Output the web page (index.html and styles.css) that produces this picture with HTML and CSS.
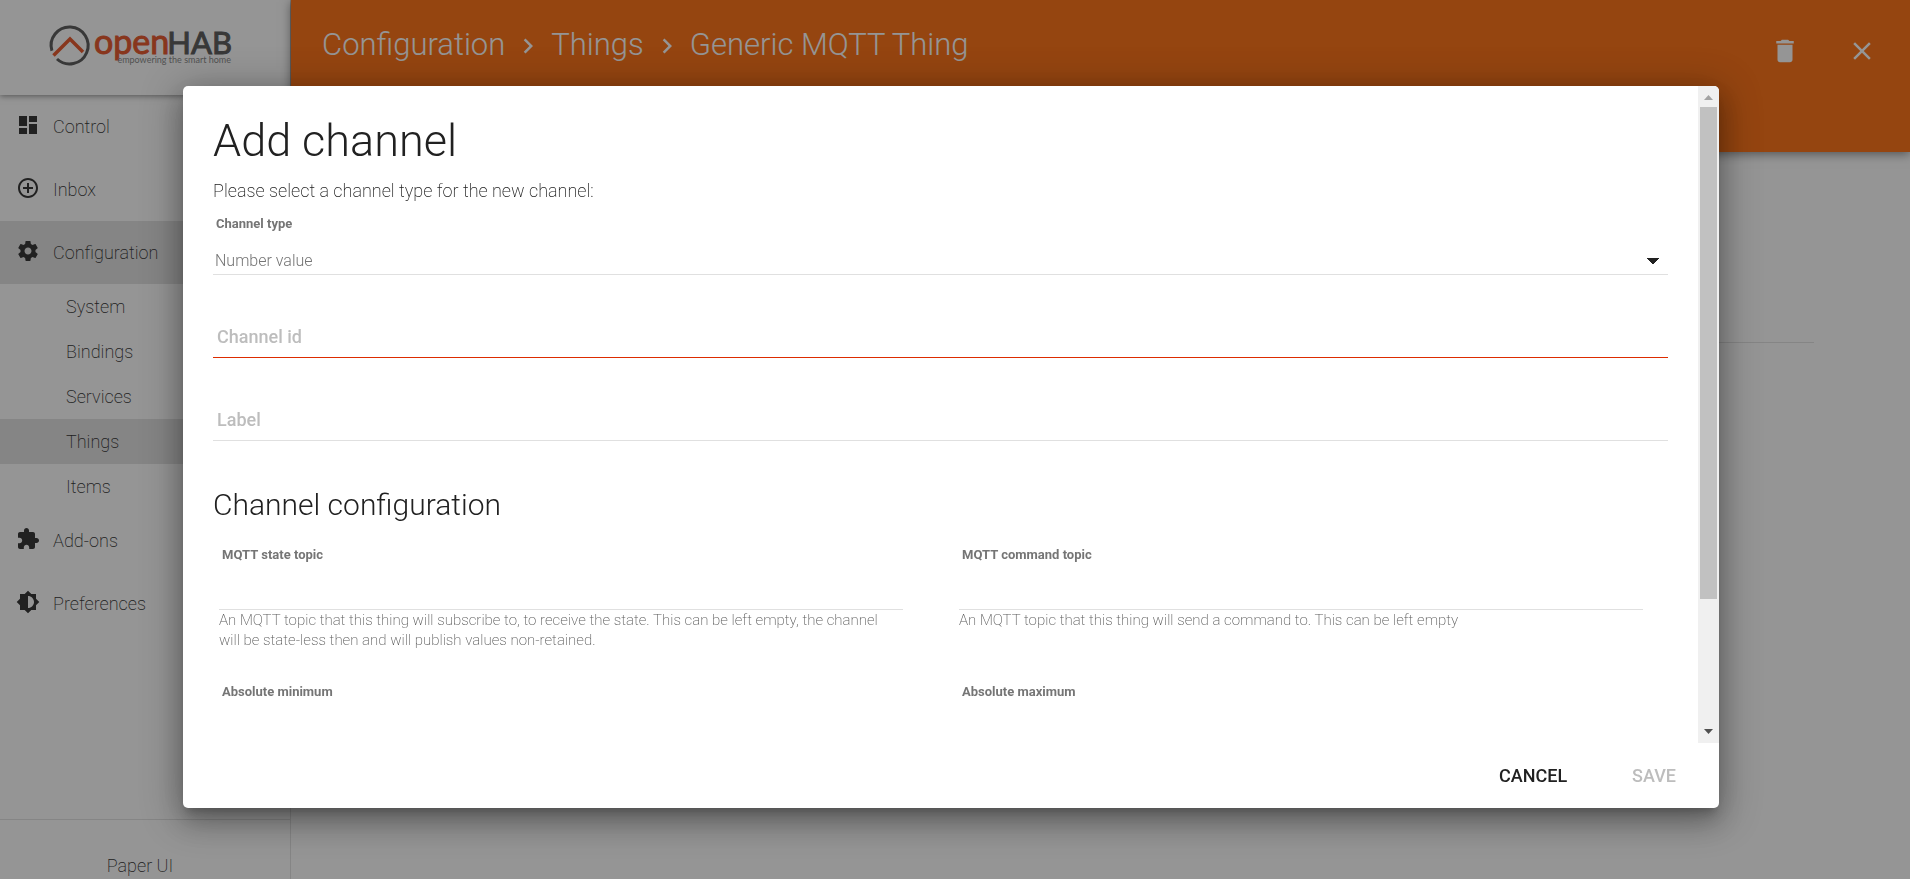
FILE: index.html
```html
<!DOCTYPE html>
<html lang="en">
<head>
    <meta charset="UTF-8">
    <meta name="viewport" content="width=device-width, initial-scale=1.0">
    <title>openHAB Paper UI</title>
    <link rel="stylesheet" href="styles.css">
</head>
<body>

    <div class="app">
        <aside class="sidebar">
            <div class="logo">
                <svg width="190" height="50" viewBox="0 0 190 50" role="img" aria-label="openHAB">
                    <path d="M1.900 24.800A18.500 18.500 0 1 1 7 33" fill="none" stroke="#4d4d4d" stroke-width="3"/>
                    <path d="M3.500 29.500L20 13L33 26" fill="none" stroke="#e64a19" stroke-width="3.500"/>
                    <text x="44" y="28" class="logo-open">open</text>
                    <text x="182" y="28" text-anchor="end" class="logo-hab">HAB</text>
                    <text x="181" y="37" text-anchor="end" class="logo-tag">empowering the smart home</text>
                </svg>
            </div>
            <nav class="menu">
                <a href="#control" class="menu-item">
                    <svg class="icon" viewBox="0 0 24 24"><path d="M3 13h8V3H3v10zm0 8h8v-6H3v6zm10 0h8V11h-8v10zm0-18v6h8V3h-8z"/></svg>
                    Control
                </a>
                <a href="#inbox" class="menu-item">
                    <svg class="icon" viewBox="0 0 24 24"><path d="M13 7h-2v4H7v2h4v4h2v-4h4v-2h-4V7zm-1-5C6.480 2 2 6.480 2 12s4.480 10 10 10 10-4.480 10-10S17.520 2 12 2zm0 18c-4.410 0-8-3.590-8-8s3.590-8 8-8 8 3.590 8 8-3.590 8-8 8z"/></svg>
                    Inbox
                </a>
                <a href="#configuration" class="menu-item active">
                    <svg class="icon" viewBox="0 0 24 24"><path d="M19.430 12.980c.04-.32.07-.64.07-.98s-.03-.66-.07-.98l2.110-1.650c.19-.15.24-.42.12-.64l-2-3.460c-.12-.22-.39-.3-.61-.22l-2.490 1c-.52-.4-1.080-.73-1.690-.98l-.38-2.650C14.460 2.180 14.250 2 14 2h-4c-.25 0-.46.18-.49.42l-.38 2.650c-.61.25-1.170.59-1.690.98l-2.490-1c-.23-.09-.49 0-.61.22l-2 3.460c-.13.22-.07.49.12.64l2.110 1.650c-.04.32-.07.65-.07.98s.03.66.07.98l-2.110 1.650c-.19.15-.24.42-.12.64l2 3.460c.12.22.39.3.61.22l2.490-1c.52.4 1.080.73 1.690.98l.38 2.650c.03.24.24.42.49.42h4c.25 0 .46-.18.49-.42l.38-2.650c.61-.25 1.170-.59 1.690-.98l2.490 1c.23.09.49 0 .61-.22l2-3.460c.12-.22.07-.49-.12-.64l-2.110-1.650zM12 15.500c-1.930 0-3.500-1.570-3.500-3.500s1.570-3.500 3.500-3.500 3.500 1.570 3.500 3.500-1.570 3.500-3.500 3.500z"/></svg>
                    Configuration
                </a>
                <a href="#system" class="sub-item">System</a>
                <a href="#bindings" class="sub-item">Bindings</a>
                <a href="#services" class="sub-item">Services</a>
                <a href="#things" class="sub-item active">Things</a>
                <a href="#items" class="sub-item">Items</a>
                <a href="#addons" class="menu-item">
                    <svg class="icon" viewBox="0 0 24 24"><path d="M20.500 11H19V7c0-1.100-.9-2-2-2h-4V3.500C13 2.120 11.880 1 10.500 1S8 2.120 8 3.500V5H4c-1.100 0-1.990.9-1.990 2v3.800H3.500c1.490 0 2.700 1.210 2.700 2.700s-1.210 2.700-2.700 2.700H2V20c0 1.100.9 2 2 2h3.800v-1.500c0-1.490 1.210-2.700 2.700-2.700 1.490 0 2.700 1.210 2.700 2.700V22H17c1.100 0 2-.9 2-2v-4h1.500c1.380 0 2.500-1.120 2.500-2.500S21.880 11 20.500 11z"/></svg>
                    Add-ons
                </a>
                <a href="#preferences" class="menu-item">
                    <svg class="icon" viewBox="0 0 24 24"><path d="M20 15.310L23.310 12 20 8.690V4h-4.690L12 .69 8.690 4H4v4.690L.69 12 4 15.310V20h4.690L12 23.310 15.310 20H20v-4.690zM12 18V6c3.310 0 6 2.690 6 6s-2.690 6-6 6z"/></svg>
                    Preferences
                </a>
            </nav>
            <div class="sidebar-footer">Paper UI</div>
        </aside>

        <main class="main">
            <header class="toolbar">
                <div class="breadcrumb">
                    <a href="#configuration">Configuration</a>
                    <svg class="chevron" viewBox="0 0 24 24"><path d="M10 6L8.590 7.410 13.170 12l-4.580 4.590L10 18l6-6z"/></svg>
                    <a href="#things">Things</a>
                    <svg class="chevron" viewBox="0 0 24 24"><path d="M10 6L8.590 7.410 13.170 12l-4.580 4.590L10 18l6-6z"/></svg>
                    <span>Generic MQTT Thing</span>
                </div>
                <div class="toolbar-actions">
                    <button type="button" aria-label="Delete"><svg viewBox="0 0 24 24"><path d="M6 19c0 1.100.9 2 2 2h8c1.100 0 2-.9 2-2V7H6v12zM19 4h-3.500l-1-1h-5l-1 1H5v2h14V4z"/></svg></button>
                    <button type="button" aria-label="Close"><svg viewBox="0 0 24 24"><path d="M19 6.410L17.590 5 12 10.590 6.410 5 5 6.410 10.590 12 5 17.590 6.410 19 12 13.410 17.590 19 19 17.590 13.410 12z"/></svg></button>
                </div>
            </header>
            <hr class="divider">
        </main>
    </div>

    <div class="backdrop">
        <form class="dialog" role="dialog" aria-labelledby="dialog-title">
            <div class="dialog-main">
                <div class="dialog-content">
                    <h1 id="dialog-title">Add channel</h1>
                    <p class="intro">Please select a channel type for the new channel:</p>

                    <div class="select-field">
                        <label for="channel-type">Channel type</label>
                        <select id="channel-type">
                            <option>Number value</option>
                        </select>
                    </div>

                    <input class="text-field invalid" type="text" placeholder="Channel id" aria-label="Channel id">
                    <input class="text-field" type="text" placeholder="Label" aria-label="Label">

                    <h2>Channel configuration</h2>
                    <div class="config-grid">
                        <div class="config-field">
                            <label for="state-topic">MQTT state topic</label>
                            <input type="text" id="state-topic">
                            <p>An MQTT topic that this thing will subscribe to, to receive the state. This can be left empty, the channel will be state-less then and will publish values non-retained.</p>
                        </div>
                        <div class="config-field">
                            <label for="command-topic">MQTT command topic</label>
                            <input type="text" id="command-topic">
                            <p>An MQTT topic that this thing will send a command to. This can be left empty</p>
                        </div>
                        <div class="config-field">
                            <label for="abs-min">Absolute minimum</label>
                            <input type="text" id="abs-min">
                        </div>
                        <div class="config-field">
                            <label for="abs-max">Absolute maximum</label>
                            <input type="text" id="abs-max">
                        </div>
                    </div>
                </div>
                <div class="scrollbar" aria-hidden="true">
                    <svg class="arrow-up" viewBox="0 0 21 21"><path d="M6 14h9l-4.500-5z"/></svg>
                    <div class="track"><div class="thumb"></div></div>
                    <svg class="arrow-down" viewBox="0 0 21 21"><path d="M6 7h9l-4.500 5z"/></svg>
                </div>
            </div>
            <div class="dialog-actions">
                <button type="button">CANCEL</button>
                <button type="submit" disabled>SAVE</button>
            </div>
        </form>
    </div>

</body>
</html>
```
FILE: styles.css
```css
:root {
    --orange: #ff6600;
    --text: #212121;
    --text-secondary: #757575;
    --hint: #bdbdbd;
    --line: #e0e0e0;
    --error: #dd2c00;
}

* { box-sizing: border-box; margin: 0; padding: 0; }
body { font-family: Roboto, sans-serif; font-size: 18px; font-weight: 200; color: var(--text); background: #fff; height: 100vh; overflow: hidden; }
a { color: inherit; text-decoration: none; }
button, input, select { font: inherit; color: inherit; background: none; border: none; border-radius: 0; outline: none; }

.app { display: flex; height: 100%; }

/* sidebar */
.sidebar { width: 291px; flex: none; display: flex; flex-direction: column; border-right: 1px solid var(--line); }
.logo { height: 95px; flex: none; padding: 26px 0 0 50px; box-shadow: 0 1px 6px rgba(0, 0, 0, 0.5); }
.logo svg { overflow: visible; }
.logo-open { font-family: Lato, sans-serif; font-size: 34px; font-weight: 400; fill: #e64a19; stroke: #e64a19; stroke-width: 1px; }
.logo-hab { font-family: Lato, sans-serif; font-size: 31px; font-weight: 400; fill: #4d4d4d; stroke: #4d4d4d; stroke-width: 1px; }
.logo-tag { font-family: Lato, sans-serif; font-size: 9px; font-weight: 400; fill: #808080; }

.menu { flex: 1; }
.menu-item { display: flex; align-items: center; gap: 13px; height: 63px; padding: 0 16px; }
.menu-item .icon { width: 24px; height: 24px; margin-bottom: 3px; fill: var(--text); }
.sub-item { display: flex; align-items: center; height: 45px; padding: 0 0 0 66px; }
.menu .active { background: #e0e0e0; }
.sidebar-footer { height: 60px; flex: none; border-top: 1px solid var(--line); padding: 35px 10px 0 0; text-align: center; }

/* main */
.main { flex: 1; }
.toolbar { height: 152px; display: flex; justify-content: space-between; background: var(--orange); color: #fff; padding: 25px 33px 0 31px; box-shadow: 0 2px 10px rgba(0, 0, 0, 0.5); }
.breadcrumb { display: flex; align-items: center; height: 38px; font-size: 31px; font-weight: 300; gap: 8px; }
.chevron { width: 30px; height: 30px; margin-top: 4px; fill: #fff; }
.toolbar-actions { display: flex; align-items: center; height: 52px; gap: 47px; }
.toolbar-actions button { width: 30px; height: 30px; }
.toolbar-actions svg { width: 30px; height: 30px; fill: #fff; }
.divider { border: none; border-top: 1px solid var(--line); margin: 190px 96px 0 90px; }

/* dialog */
.backdrop { position: fixed; inset: 0; display: flex; align-items: center; justify-content: center; padding: 15px 8px 0 0; background: rgba(33, 33, 33, 0.48); }
.dialog { width: 81%; max-width: 1536px; height: 722px; max-height: 84%; display: flex; flex-direction: column; background: #fff; border-radius: 5px; overflow: hidden; box-shadow: 0 8px 10px -4px rgba(0, 0, 0, 0.2), 0 16px 24px 2px rgba(0, 0, 0, 0.14), 0 6px 38px 5px rgba(0, 0, 0, 0.3); }
.dialog-main { flex: 1; min-height: 0; display: flex; }
.dialog-content { flex: 1; overflow: hidden; padding: 31px 30px 0; }
h1 { font-size: 45px; font-weight: 300; line-height: 48px; }
.intro { line-height: 28px; margin-top: 12px; }

.select-field { margin-top: 10px; }
.select-field label { display: block; font-size: 13px; font-weight: 700; line-height: 18px; color: var(--text-secondary); padding-left: 3px; }
.select-field select { width: 100%; height: 42px; padding: 13px 2px 0; font-size: 16px; font-weight: 300; color: var(--text-secondary); border-bottom: 1px solid var(--line); appearance: none; background: linear-gradient(to bottom left, var(--text) 50%, transparent 50%) right 15px top 25px / 6px 7px no-repeat, linear-gradient(to bottom right, var(--text) 50%, transparent 50%) right 9px top 25px / 6px 7px no-repeat; }
.text-field { display: block; width: 100%; height: 42px; margin-top: 41px; padding: 0 4px; border-bottom: 1px solid var(--line); }
.text-field::placeholder { color: var(--hint); font-weight: 500; opacity: 1; }
.text-field.invalid { border-color: var(--error); }

h2 { font-size: 30px; font-weight: 300; line-height: 40px; margin-top: 44px; }
.config-grid { display: grid; grid-template-columns: 1fr 1fr; column-gap: 56px; row-gap: 33px; padding: 0 25px 0 6px; margin-top: 21px; }
.config-field label { display: block; font-size: 13px; font-weight: 700; line-height: 18px; color: var(--text-secondary); padding-left: 3px; }
.config-field input { display: block; width: 100%; height: 46px; border-bottom: 1px solid var(--line); }
.config-field p { font-size: 15px; font-weight: 200; line-height: 20px; color: #5c5c5c; padding-right: 12px; }

/* scrollbar */
.scrollbar { width: 21px; flex: none; display: flex; flex-direction: column; background: #f0f0f0; }
.scrollbar svg { width: 21px; height: 21px; flex: none; }
.arrow-up { fill: #a3a3a3; }
.arrow-down { fill: #505050; }
.track { flex: 1; padding: 0 2px; }
.thumb { height: 80%; background: #c1c1c1; }

.dialog-actions { height: 65px; flex: none; display: flex; align-items: center; justify-content: flex-end; gap: 45px; padding: 0 33px 0 0; }
.dialog-actions button { padding: 0 10px; font-weight: 500; cursor: pointer; }
.dialog-actions button:disabled { color: var(--hint); cursor: default; }
```
